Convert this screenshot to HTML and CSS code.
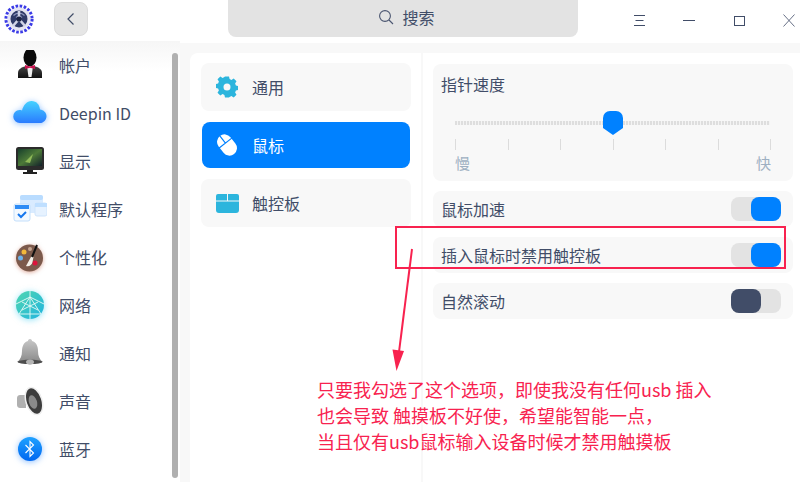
FILE: index.html
```html
<!DOCTYPE html>
<html lang="zh-CN">
<head>
    <meta charset="UTF-8">
    <meta name="viewport" content="width=device-width, initial-scale=1.0">
    <title>控制中心</title>
    <link rel="stylesheet" href="styles.css">
</head>
<body>
    <div class="window">
        <header class="titlebar">
            <svg class="app-logo" width="30" height="30" viewBox="0 0 30 30">
                <circle cx="15" cy="15" r="13" fill="none" stroke="#3b3be6" stroke-width="3.200" stroke-dasharray="2.600 1.500"/>
                <circle cx="15" cy="15" r="11.500" fill="#e4e4f2"/>
                <circle cx="15" cy="15" r="8.500" fill="#2f3a68"/>
                <path d="M9.500 11.500a7.500 7.500 0 0 1 11 0M12 13.500a4.500 4.500 0 0 1 6 0" fill="none" stroke="#8d95bd" stroke-width="1.200"/>
                <path d="M15 15l-6 7M15 15l6 7M15 15V7" stroke="#d0d3e6" stroke-width="2.600"/>
                <circle cx="15" cy="15" r="2.600" fill="#1d2444"/>
            </svg>
            <button class="back-btn">
                <svg width="10" height="14" viewBox="0 0 10 14"><path d="M7.500 1.500L2 7l5.500 5.500" fill="none" stroke="#414d68" stroke-width="1.200"/></svg>
            </button>
            <div class="search-box">
                <svg width="16" height="16" viewBox="0 0 16 16"><circle cx="7" cy="7" r="5.400" fill="none" stroke="#4a5570" stroke-width="1.100"/><path d="M11 11l4 4" stroke="#4a5570" stroke-width="1.100"/></svg>
                <span>搜索</span>
            </div>
            <div class="win-buttons">
                <svg width="11" height="11" viewBox="0 0 11 11"><path d="M0 .5h11M1.500 5.500h8M0 10.500h11" stroke="#414d68" fill="none"/></svg>
                <svg width="12" height="11" viewBox="0 0 12 11"><path d="M0 5.500h12" stroke="#414d68" fill="none"/></svg>
                <svg width="11" height="10" viewBox="0 0 11 10"><rect x=".5" y=".5" width="10" height="9" stroke="#414d68" fill="none"/></svg>
                <svg width="12" height="13" viewBox="0 0 12 13"><path d="M.5 .5l11 12M11.500 .5l-11 12" stroke="#414d68" stroke-width=".8" fill="none"/></svg>
            </div>
        </header>

        <div class="body">
            <aside class="sidebar">
                <div class="side-item">
                    <svg class="side-icon" width="34" height="30" viewBox="0 0 34 30">
                        <defs><linearGradient id="suit" x1="0" y1="0" x2="0" y2="1"><stop offset="0" stop-color="#444"/><stop offset="1" stop-color="#111"/></linearGradient></defs>
                        <path d="M5 28v-5c0-4 4-6 8-7h8c4 1 8 3 8 7v5z" fill="url(#suit)"/>
                        <path d="M14 16h6l-1.500 11h-3z" fill="#efefef"/>
                        <ellipse cx="17" cy="7.500" rx="6.500" ry="9" fill="#0a0a0a"/>
                        <path d="M12 15l5 1.500 5-1.500v4l-5-1.200L12 19z" fill="#c8124e"/>
                    </svg>
                    <span>帐户</span>
                </div>
                <div class="side-item">
                    <svg class="side-icon glow-blue" width="34" height="30" viewBox="0 0 34 30">
                        <defs><linearGradient id="cloud" x1="0" y1="0" x2="0" y2="1"><stop offset="0" stop-color="#45d2ff"/><stop offset="1" stop-color="#2a7bff"/></linearGradient></defs>
                        <path d="M7 25a6.500 6.500 0 0 1-.5-13c.8 0 1.700.1 2.500.5C10.500 7 14 3 18.500 3c5 0 8 3.500 8.500 8.500 3.500.5 6.500 3 6.500 6.700S30.500 25 27 25z" fill="url(#cloud)"/>
                    </svg>
                    <span>Deepin ID</span>
                </div>
                <div class="side-item">
                    <svg class="side-icon" width="34" height="30" viewBox="0 0 34 30">
                        <defs><linearGradient id="screen" x1="0" y1="0" x2="1" y2="1"><stop offset="0" stop-color="#173f2c"/><stop offset=".5" stop-color="#4d7a38"/><stop offset="1" stop-color="#12202a"/></linearGradient></defs>
                        <rect x="3" y="1" width="28" height="23" rx="2.500" fill="#2b2b2b"/>
                        <rect x="5" y="3" width="24" height="17" fill="url(#screen)"/>
                        <path d="M12 16l8-8-3 9z" fill="#8fba58"/>
                        <path d="M14 24h6v2h4v2H10v-2h4z" fill="#222"/>
                    </svg>
                    <span>显示</span>
                </div>
                <div class="side-item">
                    <svg class="side-icon" width="34" height="30" viewBox="0 0 34 30">
                        <rect x="7" y="1" width="23" height="18" rx="3" fill="#d9ebff"/>
                        <rect x="7" y="1" width="23" height="5" rx="2" fill="#b9dcff"/>
                        <rect x="22" y="9" width="12" height="13" rx="2" fill="#e6f2ff" stroke="#cfe4fb"/>
                        <rect x="22" y="9" width="12" height="4" fill="#bfdfff"/>
                        <rect x="1" y="10" width="16" height="17" rx="2" fill="#f3f9ff" stroke="#c4dffb"/>
                        <rect x="2" y="11" width="14" height="4" fill="#2f8cf5"/>
                        <path d="M5 20l3 3 5-5" fill="none" stroke="#1677ee" stroke-width="2"/>
                    </svg>
                    <span>默认程序</span>
                </div>
                <div class="side-item">
                    <svg class="side-icon glow-brown" width="34" height="30" viewBox="0 0 34 30">
                        <circle cx="16.500" cy="16" r="13.500" fill="#7c5a4c"/>
                        <circle cx="11" cy="10" r="2.500" fill="#f2b83a"/>
                        <circle cx="17" cy="7" r="2" fill="#c6a692"/>
                        <circle cx="7.500" cy="16" r="2.500" fill="#6cb2ea"/>
                        <circle cx="22" cy="21" r="2.500" fill="#dc143c"/>
                        <path d="M18.500 14L13 24c3 1 6-1 6.500-4l1-5z" fill="#f4f0ea"/>
                        <path d="M19 15l5-12" stroke="#111" stroke-width="2"/>
                    </svg>
                    <span>个性化</span>
                </div>
                <div class="side-item">
                    <svg class="side-icon glow-cyan" width="34" height="30" viewBox="0 0 34 30">
                        <defs><linearGradient id="globe" x1="0" y1="0" x2="1" y2="1"><stop offset="0" stop-color="#4fd6b0"/><stop offset="1" stop-color="#20b4e0"/></linearGradient></defs>
                        <circle cx="17" cy="15" r="14" fill="url(#globe)"/>
                        <path d="M17 1v28M17 7L6 24M17 7l11 17M17 7L3 14M17 7l14 7M6 24h22M9 20l16-8M25 20L9 12" stroke="#e8fbf6" stroke-width=".9" fill="none"/>
                    </svg>
                    <span>网络</span>
                </div>
                <div class="side-item">
                    <svg class="side-icon" width="34" height="30" viewBox="0 0 34 30">
                        <defs><linearGradient id="bell" x1="0" y1="0" x2="0" y2="1"><stop offset="0" stop-color="#c8c8c8"/><stop offset="1" stop-color="#8a8a8a"/></linearGradient></defs>
                        <path d="M17 1c-1.500 0-2 1-2 2-4 1-6 5-6 10 0 5-1.500 8-4.500 11h25c-3-3-4.500-6-4.500-11 0-5-2-9-6-10 0-1-.5-2-2-2z" fill="url(#bell)"/>
                        <path d="M4.500 23.500c4-2.500 21-2.500 25 0 1 3.500-26 3.500-25 0z" fill="#4d4d4d"/>
                        <ellipse cx="17" cy="24" rx="4" ry="2.500" fill="#b4b4b4"/>
                    </svg>
                    <span>通知</span>
                </div>
                <div class="side-item">
                    <svg class="side-icon" width="34" height="30" viewBox="0 0 34 30">
                        <path d="M7 9h6v13H7c-1.500 0-3-1-3-3v-7c0-2 1.500-3 3-3z" fill="#b0b0b0"/>
                        <ellipse cx="21" cy="15" rx="8" ry="14" transform="rotate(-18 21 15)" fill="#3d3d3d" stroke="#efefef" stroke-width="1.500"/>
                        <ellipse cx="20" cy="16" rx="4" ry="7" transform="rotate(-18 20 16)" fill="#8a8a8a"/>
                    </svg>
                    <span>声音</span>
                </div>
                <div class="side-item">
                    <svg class="side-icon glow-blue" width="34" height="30" viewBox="0 0 34 30">
                        <defs><linearGradient id="bt" x1="0" y1="0" x2="0" y2="1"><stop offset="0" stop-color="#1fa2ff"/><stop offset="1" stop-color="#0066f0"/></linearGradient></defs>
                        <circle cx="17" cy="15" r="12" fill="url(#bt)"/>
                        <path d="M12.500 11l8 8-3.500 3.500v-15l3.500 3.500-8 8" fill="none" stroke="#fff" stroke-width="1.100"/>
                    </svg>
                    <span>蓝牙</span>
                </div>
                <div class="scrollbar"></div>
            </aside>

            <main class="panel">
                <nav class="sub-nav">
                    <div class="nav-card">
                        <svg width="22" height="22" viewBox="0 0 22 22">
                            <path d="M9 1h4l.6 2.600 1.800.8L17.700 3l2.800 2.800-1.400 2.300.8 1.800 2.600.6v4l-2.600.6-.8 1.800 1.400 2.300-2.800 2.800-2.300-1.400-1.800.8L13 22H9l-.6-2.600-1.800-.8L4.300 20l-2.800-2.800 1.400-2.300-.8-1.800L-.5 12.500v-4l2.600-.6.8-1.800L1.500 3.800 4.300 1l2.300 1.400 1.800-.8z" transform="translate(0 -.5)" fill="#2cb5dd"/>
                            <circle cx="11" cy="11" r="3.500" fill="#f8f8f8"/>
                        </svg>
                        <span>通用</span>
                    </div>
                    <div class="nav-card is-active">
                        <svg width="22" height="22" viewBox="0 0 22 22">
                            <g transform="rotate(-38 11 11)">
                                <rect x="3.500" y="-.5" width="15" height="23" rx="7.500" fill="#fff"/>
                                <path d="M3 8.500h16M11 -1v9.500" stroke="#0081ff" stroke-width="1.200"/>
                            </g>
                        </svg>
                        <span>鼠标</span>
                    </div>
                    <div class="nav-card">
                        <svg class="pad-icon" width="23" height="19" viewBox="0 0 23 19">
                            <path d="M2 0h9v6.500H0V2a2 2 0 0 1 2-2zM12 0h9a2 2 0 0 1 2 2v4.500H12zM0 7.500h23V16a3 3 0 0 1-3 3H3a3 3 0 0 1-3-3z" fill="#2cb5dd"/>
                        </svg>
                        <span>触控板</span>
                    </div>
                </nav>

                <section class="settings">
                    <div class="speed-card">
                        <div class="speed-title">指针速度</div>
                        <div class="slider">
                            <div class="slider-track"></div>
                            <svg class="slider-handle" width="20" height="24" viewBox="0 0 20 24"><path d="M7 0h6a7 7 0 0 1 7 7v10l-10 7L0 17V7a7 7 0 0 1 7-7z" fill="#0081ff"/></svg>
                        </div>
                        <div class="ticks">
                            <i></i><i></i><i></i><i></i><i></i><i></i><i></i>
                        </div>
                        <div class="speed-labels"><span>慢</span><span>快</span></div>
                    </div>
                    <div class="switch-row">
                        <span>鼠标加速</span>
                        <div class="switch is-on"><b></b></div>
                    </div>
                    <div class="switch-row">
                        <span>插入鼠标时禁用触控板</span>
                        <div class="switch is-on"><b></b></div>
                    </div>
                    <div class="switch-row">
                        <span>自然滚动</span>
                        <div class="switch"><b></b></div>
                    </div>
                </section>
            </main>
        </div>

        <!-- red markup drawn on top of the screenshot -->
        <svg class="markup" width="800" height="482" viewBox="0 0 800 482">
            <rect x="396" y="227" width="389" height="41" fill="none" stroke="#f8224f" stroke-width="2"/>
            <path d="M412 249L399 352" stroke="#f8224f" stroke-width="2"/>
            <path d="M392.500 349.500L396.500 371L404 351z" fill="#f8224f"/>
        </svg>
        <div class="note">
            <div>只要我勾选了这个选项，即使我没有任何usb 插入</div>
            <div>也会导致 触摸板不好使，希望能智能一点，</div>
            <div>当且仅有usb鼠标输入设备时候才禁用触摸板</div>
        </div>
    </div>
</body>
</html>
```

FILE: styles.css
```css
html, body {
    margin: 0;
    padding: 0;
}

body {
    font-family: "Noto Sans CJK SC", "Noto Sans", sans-serif;
    font-size: 16px;
    color: #414d68;
    background: #fff;
}

.window {
    position: relative;
    width: 800px;
    height: 482px;
    overflow: hidden;
    display: flex;
    flex-direction: column;
}

/* title bar */
.titlebar {
    height: 43px;
    flex: none;
    display: flex;
    align-items: flex-start;
    background: #fff;
}

.app-logo {
    margin: 4px 0 0 4px;
}

.back-btn {
    width: 34px;
    height: 34px;
    margin: 2px 0 0 20px;
    padding: 0;
    display: flex;
    align-items: center;
    justify-content: center;
    background: #e6e6e6;
    border: 1px solid #dcdcdc;
    border-radius: 8px;
}

.search-box {
    width: 350px;
    height: 37px;
    box-sizing: border-box;
    margin-left: 140px;
    padding: 0 0 3px 7px;
    display: flex;
    align-items: center;
    justify-content: center;
    gap: 8px;
    background: #e3e3e3;
    border-radius: 0 0 8px 8px;
}

.win-buttons {
    flex: 1;
    display: flex;
    align-items: center;
    justify-content: space-between;
    height: 41px;
    padding: 0 5px 0 56px;
}

/* body */
.body {
    flex: 1;
    min-height: 0;
    display: flex;
    background: #f8f8f8;
    padding-top: 10px;
}

.sidebar {
    position: relative;
    width: 180px;
    flex: none;
    margin-top: -12px;
    background: linear-gradient(to bottom, #f6f6f6, #fff 30px);
}

.side-item {
    height: 48px;
    display: flex;
    align-items: center;
    gap: 12px;
    padding-left: 13px;
}

.glow-blue {
    filter: drop-shadow(0 1px 3px rgba(30, 130, 255, 0.5));
}

.glow-cyan {
    filter: drop-shadow(0 1px 3px rgba(40, 200, 240, 0.5));
}

.glow-brown {
    filter: drop-shadow(0 1px 2px rgba(190, 90, 60, 0.5));
}

.scrollbar {
    position: absolute;
    top: 12px;
    left: 172px;
    width: 6px;
    height: 425px;
    background: #b0b0b0;
    border-radius: 3px;
}

.panel {
    flex: 1;
    margin-left: 10px;
    display: flex;
    background: #fff;
    border-top-left-radius: 8px;
}

.sub-nav {
    width: 233px;
    flex: none;
    box-sizing: border-box;
    padding: 10px 10px 10px 11px;
    display: flex;
    flex-direction: column;
    gap: 11px;
    border-right: 2px solid #f8f8f8;
}

.nav-card {
    height: 48px;
    display: flex;
    align-items: center;
    gap: 14px;
    padding-left: 15px;
    background: #f8f8f8;
    border-radius: 8px;
}

.nav-card.is-active {
    height: 46px;
    margin: 0 1px;
    padding-left: 14px;
    color: #fff;
    background: #0081ff;
}

.pad-icon {
    margin-right: -1px;
}

.settings {
    flex: 1;
    padding: 11px 7px 0 10px;
    display: flex;
    flex-direction: column;
    gap: 10px;
}

.speed-card {
    height: 117px;
    box-sizing: border-box;
    padding: 6px 9px 0 8px;
    background: #f8f8f8;
    border-radius: 8px;
}

.speed-title {
    line-height: 28px;
}

.slider {
    position: relative;
    height: 24px;
    margin: 13px 14px 0 14px;
    display: flex;
    align-items: center;
}

.slider-track {
    width: 100%;
    height: 4px;
    background: repeating-linear-gradient(to right, #dedede 0, #dedede 2px, #f4f4f4 2px, #f4f4f4 3px);
}

.slider-handle {
    position: absolute;
    top: 0;
    left: 148px;
}

.ticks {
    display: flex;
    justify-content: space-between;
    margin: 4px 13px 0 14px;
}

.ticks i {
    width: 1px;
    height: 11px;
    background: #dcdcdc;
}

.speed-labels {
    display: flex;
    justify-content: space-between;
    margin: 1px 13px 0 14px;
    font-size: 15px;
    line-height: 24px;
    color: #9eb0c2;
}

.switch-row {
    height: 36px;
    flex: none;
    display: flex;
    align-items: center;
    justify-content: space-between;
    padding: 0 12px 0 8px;
    background: #f8f8f8;
    border-radius: 8px;
}

.switch {
    width: 50px;
    height: 24px;
    display: flex;
    background: #e3e3e3;
    border-radius: 8px;
}

.switch b {
    width: 30px;
    height: 24px;
    background: #414d68;
    border-radius: 8px;
}

.switch.is-on {
    justify-content: flex-end;
}

.switch.is-on b {
    background: #0081ff;
}

/* annotation */
.markup {
    position: absolute;
    top: 0;
    left: 0;
}

.note {
    position: absolute;
    top: 376px;
    left: 317px;
    font-size: 18px;
    line-height: 26px;
    color: #f8224f;
    white-space: nowrap;
}
```
